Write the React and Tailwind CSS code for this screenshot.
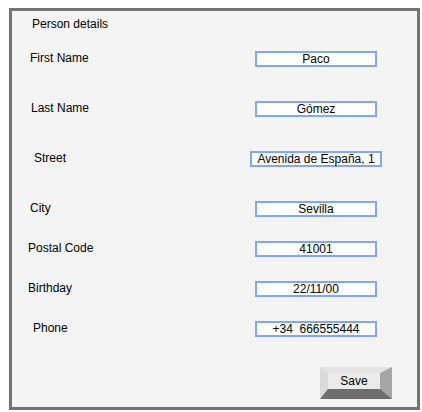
import React from "react";

const fields = [
  { label: "First Name", value: "Paco", pl: "pl-[18px]", col: "w-[243px]", box: "w-[122px]", gap: "" },
  { label: "Last Name", value: "Gómez", pl: "pl-[19px]", col: "w-[243px]", box: "w-[122px]", gap: "mt-[34px]" },
  { label: "Street", value: "Avenida de España, 1", pl: "pl-[22px]", col: "w-[238px]", box: "w-[132px]", gap: "mt-[34px]" },
  { label: "City", value: "Sevilla", pl: "pl-[18px]", col: "w-[243px]", box: "w-[122px]", gap: "mt-[34px]" },
  { label: "Postal Code", value: "41001", pl: "pl-[16px]", col: "w-[243px]", box: "w-[122px]", gap: "mt-[24px]" },
  { label: "Birthday", value: "22/11/00", pl: "pl-[16px]", col: "w-[243px]", box: "w-[122px]", gap: "mt-[24px]" },
  { label: "Phone", value: "+34  666555444", pl: "pl-[21px]", col: "w-[243px]", box: "w-[122px]", gap: "mt-[24px]" },
];

const App = () => {
  return (
    <div className="bg-white w-[422px] h-[412px] pt-[8px] pl-[9px] font-['Liberation_Sans',Arial,sans-serif] text-[12px] text-black">
      <div className="w-[411px] h-[402px] border-[3px] border-[#747474] bg-[#f4f4f4] flex flex-col">
        <div className="pt-[6px] pl-[20px] h-[20px] leading-[14px]">Person details</div>

        <div className="mt-[20px] flex flex-col">
          {fields.map((f) => (
            <div key={f.label} className={`flex items-center h-[16px] ${f.gap}`}>
              <div className={`${f.col} ${f.pl} shrink-0 mb-[3px] leading-[14px]`}>{f.label}</div>
              <div
                className={`${f.box} h-[16px] border-2 border-[#80a6fb] bg-white flex items-center justify-center leading-[12px] whitespace-pre`}
              >
                {f.value}
              </div>
            </div>
          ))}
        </div>

        <div className="mt-[30px] pl-[308px]">
          <button
            type="button"
            className="w-[72px] h-[32px] border-t-[6px] border-l-[8px] border-r-[12px] border-b-[10px] border-t-[#e4e4e4] border-l-[#dadada] border-r-[#a6a6a6] border-b-[#6e6e6e] bg-[#ebebeb] flex items-center justify-center leading-[12px]"
          >
            Save
          </button>
        </div>
      </div>
    </div>
  );
};

export default App;
